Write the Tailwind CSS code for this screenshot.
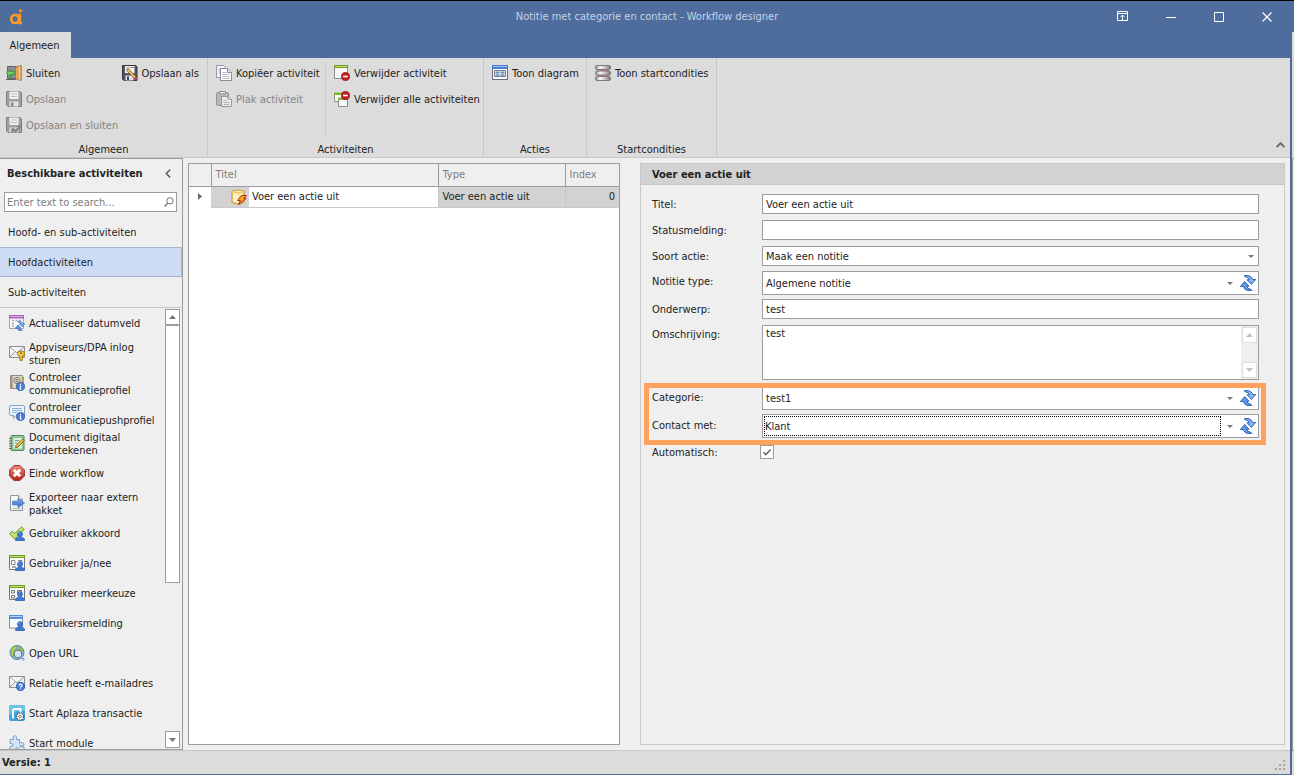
<!DOCTYPE html>
<html lang="nl">
<head>
<meta charset="utf-8">
<title>Notitie met categorie en contact - Workflow designer</title>
<script src="https://cdn.jsdelivr.net/npm/@tailwindcss/browser@4"></script>
</head>
<body class="h-screen overflow-hidden bg-[#efefef] text-[11px] leading-[13px] text-[#222222] font-['DejaVu_Sans_Condensed','DejaVu_Sans',sans-serif]">

<svg width="0" height="0" class="absolute" aria-hidden="true">
  <defs>
    <linearGradient id="blueG" x1="0" y1="0" x2="0" y2="1"><stop offset="0" stop-color="#8fb4ee"/><stop offset="1" stop-color="#2d62bd"/></linearGradient>
    <linearGradient id="redG" x1="0" y1="0" x2="0" y2="1"><stop offset="0" stop-color="#ef8a7c"/><stop offset="1" stop-color="#b92217"/></linearGradient>
    <linearGradient id="paperG" x1="0" y1="0" x2="1" y2="1"><stop offset="0" stop-color="#ffffff"/><stop offset="1" stop-color="#dfe3ea"/></linearGradient>
    <linearGradient id="metalG" x1="0" y1="0" x2="1" y2="0"><stop offset="0" stop-color="#888"/><stop offset=".3" stop-color="#f8f8f8"/><stop offset=".6" stop-color="#ccc"/><stop offset="1" stop-color="#777"/></linearGradient>
    <symbol id="user" viewBox="0 0 10 10"><path d="M.5 9.5V8.2Q.7 6.8 3.4 6.4L3.6 5.6Q2.4 4.4 2.5 2.8 2.8.6 5 .6T7.5 2.8Q7.6 4.4 6.4 5.6l.2.8q2.7.4 2.9 1.8v1.3z" fill="#3f78d4" stroke="#1f4fa5" stroke-width=".7"/><path d="M3.6 2.6Q4 1.4 5.2 1.5" stroke="#8db6f5" fill="none"/></symbol>
    <symbol id="info" viewBox="0 0 10 10"><circle cx="5" cy="5" r="4.5" fill="#4680da" stroke="#24529f" stroke-width=".8"/><path d="M5 2v1.2M4.2 4.5H5V7.8M4 7.8h2.2" stroke="#fff" stroke-width="1.2" fill="none"/></symbol>
    <symbol id="minus" viewBox="0 0 10 10"><circle cx="5" cy="5" r="4.5" fill="#c21f24" stroke="#8c1015" stroke-width=".8"/><path d="M2.4 5h5.2" stroke="#fff" stroke-width="1.8"/></symbol>
    <symbol id="save" viewBox="0 0 16 16"><path d="M.5.5h13.2l1.8 1.2v13.800H2L.5 14z" fill="#a0a0a0" stroke="#808080"/><path d="M3.500.500h9v7.500h-9z" fill="#f0f0f0"/><path d="M5 3h6M5 5.500h6" stroke="#bdbdbd"/><path d="M3.500 10.500h9v5h-9z" fill="#e2e2e2"/><path d="M5 11.500h2.500v4H5z" fill="#8a8a8a"/></symbol>
    <symbol id="refresh" viewBox="0 0 16 16"><path d="M6 15.500h8" stroke="#c9ced6" stroke-width=".8"/><path d="M4.500.600H8.500L11.200 2 12.700 4.500H15.700L11.400 9.400 7 4.800H9.400Q9 2.400 4.500 1.400z" fill="#86b2f3" stroke="#1d5bb0" stroke-width=".9" stroke-linejoin="round"/><path d="M11.300 15.400H7.300L4.700 14 3.300 11.500H.4L4.700 6.500 9 11.200H6.600Q7 13.600 11.300 14.600z" fill="#6398e6" stroke="#1d5bb0" stroke-width=".9" stroke-linejoin="round"/></symbol>
    <symbol id="env" viewBox="0 0 16 16"><path d="M.5 2.500h15v11H.5z" fill="url(#paperG)" stroke="#8b8f96"/><path d="M1 3l7 6 7-6M1 13l5.200-5.200M15 13L9.800 7.800" fill="none" stroke="#8b8f96" stroke-width=".9"/></symbol>
    <symbol id="up" viewBox="0 0 7 4"><path d="M3.500 0L7 4H0z" fill="currentColor"/></symbol>
    <symbol id="down" viewBox="0 0 7 4"><path d="M0 0h7L3.500 4z" fill="currentColor"/></symbol>
  </defs>
</svg>

<div class="flex h-full flex-col border-t border-black">
  <header class="relative flex h-[31px] shrink-0 items-center justify-between bg-[#4f6d9c] pr-[21px] pl-[9px]">
    <svg class="h-[16px] w-[14px]" viewBox="0 0 14 16"><path d="M6 6C3.500 6 2.300 7.700 2.300 10s1.200 4 3.700 4 4-1.700 4-4-1.500-4-4-4z" fill="none" stroke="#ff9a26" stroke-width="2.600"/><path d="M9 4.700h3V13h1v2.300H9.200z" fill="#ff9a26"/><path d="M11.500 0v3.600M9.700 1.800h3.600" stroke="#ff9a26" stroke-width="1.200"/></svg>
    <h1 class="absolute inset-x-0 text-center text-[#c5d2e8]">Notitie met categorie en contact - Workflow designer</h1>
    <div class="relative flex items-center gap-[36px] text-white">
      <button aria-label="Lint weergeven" class="w-[12px]"><svg class="h-[11px] w-[12px]" viewBox="0 0 12 11" fill="none" stroke="currentColor"><path d="M.5.500h10v9H.5zM.5 2.500h10M5.500 9V4.500M3.500 6L5.500 4l2 2"/></svg></button>
      <button aria-label="Minimaliseren" class="w-[12px]"><svg class="h-[12px] w-[12px]" viewBox="0 0 12 12" stroke="currentColor"><path d="M1 6.500h10"/></svg></button>
      <button aria-label="Maximaliseren" class="w-[12px]"><svg class="h-[12px] w-[12px]" viewBox="0 0 12 12" fill="none" stroke="currentColor"><path d="M1.500 1.500h9v9h-9z"/></svg></button>
      <button aria-label="Sluiten" class="w-[12px]"><svg class="h-[12px] w-[12px]" viewBox="0 0 12 12" stroke="currentColor" stroke-width="1.200"><path d="M1.500 1.500l9 9M10.500 1.500l-9 9"/></svg></button>
    </div>
  </header>

  <div class="flex min-h-0 flex-1">
    <div class="flex min-w-0 flex-1 flex-col border-r-2 border-b border-[#4f6d9c]">
      <nav class="flex h-[26px] shrink-0 bg-[#4f6d9c]"><button class="w-[71px] bg-[#dcdcdc] pr-[2px]">Algemeen</button></nav>

      <section class="flex h-[100px] shrink-0 border-b border-[#c8c8c8] bg-[#dcdcdc]" aria-label="Lint">
        <div class="flex w-[208px] flex-col border-r border-[#c8c8c8] pt-[2px]">
          <div class="flex flex-1 justify-between pr-[8px] pl-[6px]">
            <div class="flex flex-col">
              <button class="flex h-[26px] items-center gap-[4px]"><svg class="size-[16px]" viewBox="0 0 16 16"><path d="M1.500 1.500h9v12h-9z" fill="#8b9095" stroke="#5f6468"/><path d="M0 14.500h10" stroke="#666"/><path d="M9.500 2L15.300.400v15.200L9.500 13.800z" fill="#e3a55c" stroke="#a8743a" stroke-width=".8"/><path d="M13.500 1.500v13" stroke="#f6d3a0"/><path d="M.4 8.200L4.500 4.500v2.200H8.600v3H4.500v2.500z" fill="#79c967" stroke="#2f8430" stroke-width=".8"/></svg>Sluiten</button>
              <button class="flex h-[26px] items-center gap-[4px] text-[#848484]" disabled><svg class="size-[16px]"><use href="#save"/></svg>Opslaan</button>
              <button class="flex h-[26px] items-center gap-[4px] text-[#848484]" disabled><svg class="size-[16px]" viewBox="0 0 16 16"><use href="#save" width="16" height="16"/><path d="M6.500 11.500l3 3 6-6.500" fill="none" stroke="#888" stroke-width="2.600"/></svg>Opslaan en sluiten</button>
            </div>
            <button class="flex h-[26px] items-center gap-[4px]"><svg class="size-[16px]" viewBox="0 0 16 16"><path d="M.5.500h13.200l1.300 1.200v13.800H2L.5 14z" fill="#555665" stroke="#33343f"/><path d="M3 1h9.500v7H3z" fill="#f7f3f5"/><path d="M4 2.500h5" stroke="#e3a0b8"/><path d="M9 2.500h3" stroke="#4caf50"/><path d="M3.500 10.500h8v5h-8z" fill="#e3e3ea"/><path d="M5 11.500h2v3.500H5z" fill="#44454f"/><path d="M5 4l8.500 9" stroke="#7a5316" stroke-width="3"/><path d="M5.500 4.500l7.500 8" stroke="#f5cb6a" stroke-width="1.800"/><path d="M13 12.500l2 2.200" stroke="#c4475c" stroke-width="2.600"/></svg>Opslaan als</button>
          </div>
          <h2 class="pb-[1px] text-center">Algemeen</h2>
        </div>
        <div class="flex w-[276px] flex-col border-r border-[#c8c8c8] pt-[2px]">
          <div class="flex flex-1">
            <div class="mt-[2px] mb-[6px] flex w-[118px] flex-col border-r border-[#c8c8c8] pl-[8px]">
              <button class="-mt-[2px] flex h-[26px] items-center gap-[4px] whitespace-nowrap"><svg class="size-[16px]" viewBox="0 0 16 16"><path d="M.5.500h7l2 2v10H.5z" fill="#f4f6f9" stroke="#969ca6"/><path d="M2.500 4h2M2.500 6h2M2.500 8h2" stroke="#aab"/><path d="M4.500 3.500h7l4 4v8h-11z" fill="#fff" stroke="#858b95"/><path d="M11.500 3.500v4h4" fill="#d9dfe8" stroke="#858b95"/><path d="M6.500 7.500h4M6.500 9.500h7M6.500 11.500h7M6.500 13.500h7" stroke="#b4bbc7"/></svg>Kopiëer activiteit</button>
              <button class="flex h-[26px] items-center gap-[4px] text-[#848484]" disabled><svg class="size-[16px]" viewBox="0 0 16 16"><rect x=".5" y="1.500" width="12" height="13" rx="1.500" fill="#b9b9b9" stroke="#929292"/><path d="M3.500.500h6v2.500h-6z" fill="#ddd" stroke="#929292"/><path d="M5.500 5.500h6l4 3v7h-10z" fill="#ececec" stroke="#979797"/><path d="M11.500 5.500v3h4M7.500 9.500h3M7.500 11.500h6M7.500 13.500h6" fill="none" stroke="#b3b3b3"/></svg>Plak activiteit</button>
            </div>
            <div class="flex flex-col pl-[8px]">
              <button class="flex h-[26px] items-center gap-[4px] whitespace-nowrap"><svg class="size-[16px]" viewBox="0 0 16 16"><path d="M.5 1.500h13v12H.5z" fill="#f8f8f8" stroke="#8c8c8c"/><path d="M0 0h14v3H0z" fill="#6f9d1e"/><path d="M1 1.500h12" stroke="#c4e07a"/><use href="#minus" x="7" y="7" width="9" height="9"/></svg>Verwijder activiteit</button>
              <button class="flex h-[26px] items-center gap-[4px] whitespace-nowrap"><svg class="size-[16px]" viewBox="0 0 16 16"><path d="M.5 2.500h8v8h-8z" fill="#f8f8f8" stroke="#8c8c8c"/><path d="M0 1.500h8v2.500H0z" fill="#84b52c"/><path d="M4.500 7.500h9v8h-9z" fill="#f8f8f8" stroke="#8c8c8c"/><path d="M4 6.500h10V9H4z" fill="#84b52c"/><use href="#minus" x="7" y="0" width="9" height="9"/></svg>Verwijder alle activiteiten</button>
            </div>
          </div>
          <h2 class="pb-[1px] text-center">Activiteiten</h2>
        </div>
        <div class="flex w-[103px] flex-col border-r border-[#c8c8c8] pt-[2px]">
          <div class="flex-1 pl-[8px]"><button class="flex h-[26px] items-center gap-[4px] whitespace-nowrap"><svg class="size-[16px]" viewBox="0 0 16 16"><path d="M.5.500h15v14H.5z" fill="#fafbfd" stroke="#686e78"/><path d="M0 0h16v4H0z" fill="#4a7bd0"/><path d="M1 1.500h14" stroke="#a4c3f5"/><path d="M2.500 5.500h11v6h-11z" fill="#fff" stroke="#777d88"/><path d="M3.500 6.500H7.500v2H3.500zM8.500 6.500h4v2h-4zM3.500 9.300h4v1.500h-4zM8.500 9.300h4v1.500h-4z" fill="#5f8db5"/></svg>Toon diagram</button></div>
          <h2 class="pb-[1px] text-center">Acties</h2>
        </div>
        <div class="flex w-[130px] flex-col border-r border-[#c8c8c8] pt-[2px]">
          <div class="flex-1 pl-[8px]"><button class="flex h-[26px] items-center gap-[4px] whitespace-nowrap"><svg class="size-[16px]" viewBox="0 0 16 16"><path d="M2 4.500h12v1.500H2zM2 10h12v1.500H2z" fill="#d9726b"/><rect x=".5" y=".5" width="15" height="4" rx="1.500" fill="url(#metalG)" stroke="#7d7d7d"/><rect x=".5" y="6" width="15" height="4" rx="1.500" fill="url(#metalG)" stroke="#7d7d7d"/><rect x=".5" y="11.500" width="15" height="4" rx="1.500" fill="url(#metalG)" stroke="#7d7d7d"/></svg>Toon startcondities</button></div>
          <h2 class="pb-[1px] text-center">Startcondities</h2>
        </div>
        <div class="flex flex-1 items-end justify-end pr-[5px] pb-[9px]"><button aria-label="Lint inklappen" class="text-[#666]"><svg class="block h-[6px] w-[9px]" viewBox="0 0 9 6" fill="none" stroke="currentColor" stroke-width="1.800"><path d="M.7 5L4.500 1.200 8.300 5"/></svg></button></div>
      </section>

      <main class="flex min-h-0 flex-1">
        <aside class="flex w-[183px] shrink-0 flex-col border-y border-r border-[#9c9c9c]">
          <div class="flex h-[29px] shrink-0 items-center justify-between pr-[11px] pl-[7px]"><h2 class="font-bold whitespace-nowrap">Beschikbare activiteiten</h2><button aria-label="Paneel inklappen" class="text-[#666]"><svg class="block h-[9px] w-[6px]" viewBox="0 0 6 9" fill="none" stroke="currentColor" stroke-width="1.600"><path d="M5.200.600L1.300 4.500l3.900 3.900"/></svg></button></div>
          <div class="mt-[4px] mr-[5px] ml-[4px] flex h-[20px] shrink-0 items-center border border-[#9c9c9c] bg-white pr-[2px] pl-[2px]">
            <input aria-label="Zoeken" placeholder="Enter text to search..." class="min-w-0 flex-1 bg-transparent outline-none placeholder:text-[#7d7d7d]">
            <svg class="size-[10px]" viewBox="0 0 10 10" fill="none" stroke="#777"><circle cx="6" cy="3.800" r="3.200"/><path d="M3.700 6.200L.6 9.400" stroke-width="1.500"/></svg>
          </div>
          <ul class="mt-[5px] shrink-0 border-b border-[#c8c8c8]">
            <li><button class="h-[30px] w-full pl-[8px] text-left">Hoofd- en sub-activiteiten</button></li>
            <li><button class="h-[30px] w-full border border-l-0 border-[#a5b4cf] bg-[#cddbf5] pl-[8px] text-left">Hoofdactiviteiten</button></li>
            <li><button class="h-[30px] w-full pl-[8px] text-left">Sub-activiteiten</button></li>
          </ul>
          <div class="flex min-h-0 flex-1 overflow-hidden">
            <ul class="min-w-0 flex-1 whitespace-nowrap">
              <li class="flex h-[30px] items-center gap-[4px] pl-[9px]"><svg class="size-[16px] shrink-0" viewBox="0 0 16 16"><path d="M.5 1.500h14v12H.5z" fill="#f8f8fa" stroke="#a5a5a5"/><path d="M0 0h15v3.500H0z" fill="#a763be"/><path d="M1 1.500h13" stroke="#dba6ea"/><path d="M3 5.500h2M6.500 5.500h2M10 5.500h2M3 8.500h2M3 11h2" stroke="#a0a4ac" stroke-width="1.500"/><use href="#refresh" x="6" y="6" width="10" height="10"/></svg>Actualiseer datumveld</li>
              <li class="flex h-[30px] items-center gap-[4px] pl-[9px]"><svg class="size-[16px] shrink-0" viewBox="0 0 16 16"><use href="#env" y="-1" width="16" height="16"/><path d="M8.500 8.500Q8.500 6 12 6T15.500 8.500Q15.500 11 13.200 11.300V15.500H11V11.300Q8.500 11 8.500 8.500z" fill="#f8cd42" stroke="#a3770f"/><circle cx="12" cy="8.300" r="1" fill="#8f6508"/></svg><span class="pt-[2px]">Appviseurs/DPA inlog<br>sturen</span></li>
              <li class="flex h-[30px] items-center gap-[4px] pl-[9px]"><svg class="size-[16px] shrink-0" viewBox="0 0 16 16"><path d="M1.500.500h12v13h-12z" fill="#ded9cc" stroke="#938a78"/><path d="M1 1h2.500v12H1z" fill="#9f927a"/><path d="M14 2v3" stroke="#84b52c" stroke-width="2"/><path d="M14 5.500v3" stroke="#d28c3c" stroke-width="2"/><circle cx="8" cy="5.500" r="3.200" fill="none" stroke="#7b7b7b"/><circle cx="8" cy="5.500" r="1.200" fill="none" stroke="#7b7b7b"/><use href="#info" x="7" y="7" width="9" height="9"/></svg><span class="pt-[2px]">Controleer<br>communicatieprofiel</span></li>
              <li class="flex h-[30px] items-center gap-[4px] pl-[9px]"><svg class="size-[16px] shrink-0" viewBox="0 0 16 16"><path d="M2 .5h12q1.500 0 1.500 1.500v7q0 1.500-1.500 1.500H7L4.500 13.500v-3H2Q.5 10.500.5 9V2Q.5.500 2 .5z" fill="#eef5fc" stroke="#7fa3c5"/><path d="M3 3.500h10M3 5.500h10M3 7.500h5" stroke="#8ab0d0"/><use href="#info" x="7" y="7" width="9" height="9"/></svg><span class="pt-[2px]">Controleer<br>communicatiepushprofiel</span></li>
              <li class="flex h-[30px] items-center gap-[4px] pl-[9px]"><svg class="size-[16px] shrink-0" viewBox="0 0 16 16"><rect x="2" y=".5" width="13" height="15" rx="1" fill="#8fc495" stroke="#548b5d"/><path d="M4.500 3h8.500v10.500H4.500z" fill="#dcefdc"/><path d="M0 3.500h3M0 6h3M0 8.500h3M0 11h3M0 13.500h3" stroke="#666"/><path d="M6 5.500h4M6 8h2" stroke="#7a9c7d"/><path d="M7 10.500L13.500 4l1.800 1.800L9 12l-2.500.8z" fill="#f2bd4a" stroke="#6f4b12" stroke-width=".8"/></svg><span class="pt-[2px]">Document digitaal<br>ondertekenen</span></li>
              <li class="flex h-[30px] items-center gap-[4px] pl-[9px]"><svg class="size-[16px] shrink-0" viewBox="0 0 16 16"><path d="M5 .6h6L15.400 5v6L11 15.400H5L.6 11V5z" fill="url(#redG)" stroke="#a62c20" stroke-linejoin="round"/><path d="M4.800 4.800l6.400 6.400M11.200 4.800l-6.400 6.400" stroke="#fff" stroke-width="3"/></svg>Einde workflow</li>
              <li class="flex h-[30px] items-center gap-[4px] pl-[9px]"><svg class="size-[16px] shrink-0" viewBox="0 0 16 16"><path d="M1.500.500h8l4 4v11h-12z" fill="url(#paperG)" stroke="#9297a0"/><path d="M9.500.500v4h4" fill="#e1e5eb" stroke="#9297a0"/><path d="M3.500 13.500h8" stroke="#bbb"/><path d="M3.500 6.200H9V3.500L15.500 8 9 12.500V9.800H3.500z" fill="url(#blueG)" stroke="#3d72cb" stroke-width=".8"/></svg><span class="pt-[2px]">Exporteer naar extern<br>pakket</span></li>
              <li class="flex h-[30px] items-center gap-[4px] pl-[9px]"><svg class="size-[16px] shrink-0" viewBox="0 0 16 16"><path d="M.6 8.500L3 6.200 5.500 8.500 12.500 1.800 15.300 4.500 5.500 14z" fill="#c2e06e" stroke="#759f2c"/><use href="#user" x="6" y="6" width="10" height="10"/></svg>Gebruiker akkoord</li>
              <li class="flex h-[30px] items-center gap-[4px] pl-[9px]"><svg class="size-[16px] shrink-0" viewBox="0 0 16 16"><path d="M.5 1.500h15v13H.5z" fill="#fafafa" stroke="#777"/><path d="M0 0h16v3H0z" fill="#6f9d1e"/><path d="M1 1.500h14" stroke="#c4e07a"/><path d="M2.500 5.500h3.500v4H2.500zM9 5.500h4v3" fill="none" stroke="#888"/><path d="M3 12h4" stroke="#555"/><use href="#user" x="6" y="6" width="10" height="10"/></svg>Gebruiker ja/nee</li>
              <li class="flex h-[30px] items-center gap-[4px] pl-[9px]"><svg class="size-[16px] shrink-0" viewBox="0 0 16 16"><path d="M.5 1.500h15v13H.5z" fill="#fafafa" stroke="#777"/><path d="M0 0h16v3H0z" fill="#6f9d1e"/><path d="M1 1.500h14" stroke="#c4e07a"/><path d="M2.500 5.500h3v2.500h-3zM2.500 10.500h3v2.500h-3zM8.500 5.500h4v2.500h-4z" fill="none" stroke="#777"/><use href="#user" x="6" y="6" width="10" height="10"/></svg>Gebruiker meerkeuze</li>
              <li class="flex h-[30px] items-center gap-[4px] pl-[9px]"><svg class="size-[16px] shrink-0" viewBox="0 0 16 16"><path d="M.5 1.500h13v11.500H.5z" fill="#fafbfd" stroke="#8c929c"/><path d="M0 0h14v4H0z" fill="#5b8adb"/><path d="M1 1.500h12" stroke="#b4cff8"/><use href="#user" x="6" y="6" width="10" height="10"/></svg>Gebruikersmelding</li>
              <li class="flex h-[30px] items-center gap-[4px] pl-[9px]"><svg class="size-[16px] shrink-0" viewBox="0 0 16 16"><circle cx="8" cy="7.500" r="7" fill="#8dbce6" stroke="#5a83b0"/><path d="M3 2.500Q6 .5 8.500 1.500L7 4.500 4.500 6 5 9.500 3.500 12Q0 8 3 2.500zM10.500 2Q14.500 4 14.500 7L11 5.500z" fill="#a3d35a" stroke="#6a9c30" stroke-width=".6"/><circle cx="9" cy="9" r="3.800" fill="#d5e7f5" fill-opacity=".9" stroke="#777" stroke-width="1.200"/><path d="M12 12l3 3" stroke="#8fb0dc" stroke-width="2.400"/></svg>Open URL</li>
              <li class="flex h-[30px] items-center gap-[4px] pl-[9px]"><svg class="size-[16px] shrink-0" viewBox="0 0 16 16"><use href="#env" y="-1" width="16" height="16"/><circle cx="11.500" cy="11.500" r="4.200" fill="#4680da" stroke="#24529f" stroke-width=".8"/><path d="M10 10.500Q10.200 9 11.600 9.100T13 10.600Q12.900 11.300 11.600 12v.6M11.600 13.400v1" fill="none" stroke="#fff" stroke-width="1.100"/></svg>Relatie heeft e-mailadres</li>
              <li class="flex h-[30px] items-center gap-[4px] pl-[9px]"><svg class="size-[16px] shrink-0" viewBox="0 0 16 16"><rect width="16" height="16" rx="2" fill="#3fa5d8"/><path d="M0 2q0-2 2-2h12q2 0 2 2v4Q8 5 0 10z" fill="#6cc3ea"/><path d="M4 13.500V5.500Q4 4 5.500 4H11.500v4" fill="none" stroke="#fff" stroke-width="1.800"/><circle cx="11" cy="11.500" r="3.600" fill="#fff" stroke="#555" stroke-width="1.400" stroke-dasharray="1.600 1"/><circle cx="11" cy="11.500" r="1.200" fill="none" stroke="#555" stroke-width=".8"/></svg>Start Aplaza transactie</li>
              <li class="flex h-[30px] items-center gap-[4px] pl-[9px]"><svg class="size-[16px] shrink-0" viewBox="0 0 16 16"><path d="M1 4.500h3.500Q3 1 5.500.700T7.500 4.500H10.500V8Q14.500 6.500 15 9T10.500 11l4.500 1v3.500H9.500Q10 12.500 8 12.500T7 15.500H1V11.500Q4 12 4 10T1 8.500z" fill="#d3e4f4" stroke="#7c9dbc"/></svg>Start module</li>
            </ul>
            <div class="mt-[1px] mr-[2px] mb-[1px] flex w-[15px] shrink-0 flex-col text-[#777]">
              <button aria-label="Omhoog" class="flex h-[16px] shrink-0 items-center justify-center border border-[#9c9c9c] bg-white"><svg class="h-[4px] w-[7px]"><use href="#up"/></svg></button>
              <div class="h-[258px] border border-[#9c9c9c] bg-white"></div>
              <div class="flex-1"></div>
              <button aria-label="Omlaag" class="flex h-[17px] shrink-0 items-center justify-center border border-[#9c9c9c] bg-white"><svg class="h-[4px] w-[7px]"><use href="#down"/></svg></button>
            </div>
          </div>
        </aside>

        <section class="mt-[5px] mb-[5px] ml-[5px] w-[432px] shrink-0 border border-[#9c9c9c] bg-white">
          <table class="w-full table-fixed border-collapse text-left">
            <colgroup><col class="w-[22px]"><col class="w-[38px]"><col class="w-[189px]"><col class="w-[127px]"><col></colgroup>
            <thead class="bg-[#efefef] text-[#7d7d7d]">
              <tr class="h-[22px] border-b border-[#9c9c9c]"><th class="border-r border-[#9c9c9c] p-0"></th><th colspan="2" class="border-r border-[#9c9c9c] p-0 pl-[4px] font-normal">Titel</th><th class="border-r border-[#9c9c9c] p-0 pl-[4px] font-normal">Type</th><th class="p-0 pl-[4px] font-normal">Index</th></tr>
            </thead>
            <tbody>
              <tr class="h-[21px]"><td class="p-0"><svg class="ml-[9px] block h-[7px] w-[4px]" viewBox="0 0 4 7"><path d="M0 0l4 3.500L0 7z" fill="#666"/></svg></td>
              <td class="border-b border-[#c8c8c8] bg-[#d2d2d2] p-0"><svg class="ml-[20px] block size-[16px]" viewBox="0 0 16 16"><path d="M1 2.500Q7-.5 13 2.500V13Q7 16.500 1 13z" fill="#fbe9a8" stroke="#d39a2e" stroke-width="1.200"/><path d="M1 2.500q6 3 12 0" fill="none" stroke="#e8c25c"/><path d="M3.500 5v8M6 6v8" stroke="#fff8dc" stroke-width="1.500"/><path d="M10.500 6.500H15.300l-2.500 2.800h2.500L7.500 15.700l2-4.200H6.500z" fill="#ffa629" stroke="#a32f14" stroke-width="1"/></svg></td>
              <td class="border-r border-b border-[#c8c8c8] p-0 pl-[3px]">Voer een actie uit</td><td class="border-r border-b border-[#c8c8c8] bg-[#d2d2d2] p-0 pl-[4px]">Voer een actie uit</td><td class="border-b border-[#c8c8c8] bg-[#d2d2d2] p-0 pr-[4px] text-right">0</td></tr>
            </tbody>
          </table>
        </section>

        <section class="mt-[5px] mr-[5px] mb-[5px] ml-[20px] min-w-0 flex-1 border border-[#c8c8c8]">
          <h2 class="flex h-[21px] items-center border-b border-[#c8c8c8] bg-[#d2d2d2] pl-[11px] font-bold">Voer een actie uit</h2>
          <form class="relative pt-[9px] pr-[25px] pl-[11px]">
            <div class="flex items-center"><label for="titel" class="w-[110px] shrink-0">Titel:</label><input id="titel" value="Voer een actie uit" class="h-[20px] min-w-0 flex-1 border border-[#9c9c9c] bg-white px-[3px] outline-none"></div>
            <div class="mt-[6px] flex items-center"><label for="status" class="w-[110px] shrink-0">Statusmelding:</label><input id="status" class="h-[20px] min-w-0 flex-1 border border-[#9c9c9c] bg-white px-[3px] outline-none"></div>
            <div class="mt-[6px] flex items-center"><label for="soort" class="w-[110px] shrink-0">Soort actie:</label>
              <div class="flex h-[20px] min-w-0 flex-1 items-center border border-[#9c9c9c] bg-white"><select id="soort" class="min-w-0 flex-1 appearance-none px-[3px] outline-none"><option>Maak een notitie</option></select><svg class="mr-[4px] h-[3px] w-[6px] text-[#777]" viewBox="0 0 6 3"><path d="M0 0h6L3 3z" fill="currentColor"/></svg></div></div>
            <div class="mt-[5px] flex items-center"><label for="type" class="w-[110px] shrink-0 pb-[3px]">Notitie type:</label>
              <div class="flex h-[24px] min-w-0 flex-1 items-center border border-[#9c9c9c] bg-white"><select id="type" class="min-w-0 flex-1 appearance-none px-[3px] outline-none"><option>Algemene notitie</option></select><svg class="mr-[7px] h-[3px] w-[6px] text-[#777]" viewBox="0 0 6 3"><path d="M0 0h6L3 3z" fill="currentColor"/></svg><button type="button" aria-label="Vernieuwen" class="mr-[2px]"><svg class="block size-[16px]"><use href="#refresh"/></svg></button></div></div>
            <div class="mt-[4px] flex items-center"><label for="onderwerp" class="w-[110px] shrink-0">Onderwerp:</label><input id="onderwerp" value="test" class="h-[20px] min-w-0 flex-1 border border-[#9c9c9c] bg-white px-[3px] outline-none"></div>
            <div class="mt-[6px] flex items-start"><label for="oms" class="w-[110px] shrink-0 pt-[3px]">Omschrijving:</label>
              <div class="flex h-[55px] min-w-0 flex-1 border border-[#9c9c9c] bg-white"><textarea id="oms" class="min-w-0 flex-1 resize-none overflow-hidden px-[3px] pt-[1px] outline-none">test</textarea>
                <div class="flex w-[17px] flex-col justify-between bg-[#efefef] p-[1px] text-[#c4c4c4]"><button type="button" aria-label="Omhoog" class="flex h-[16px] items-center justify-center border border-[#dedede] bg-white"><svg class="h-[4px] w-[7px]"><use href="#up"/></svg></button><button type="button" aria-label="Omlaag" class="flex h-[16px] items-center justify-center border border-[#dedede] bg-white"><svg class="h-[4px] w-[7px]"><use href="#down"/></svg></button></div></div></div>
            <div class="relative mt-[6px]">
              <div class="flex items-center"><label for="cat" class="w-[110px] shrink-0 pb-[2px]">Categorie:</label>
                <div class="flex h-[24px] min-w-0 flex-1 items-center border border-[#9c9c9c] bg-white"><select id="cat" class="min-w-0 flex-1 appearance-none px-[3px] outline-none"><option>test1</option></select><svg class="mr-[7px] h-[3px] w-[6px] text-[#777]" viewBox="0 0 6 3"><path d="M0 0h6L3 3z" fill="currentColor"/></svg><button type="button" aria-label="Vernieuwen" class="mr-[2px]"><svg class="block size-[16px]"><use href="#refresh"/></svg></button></div></div>
              <div class="mt-[4px] flex items-center"><label for="contact" class="w-[110px] shrink-0 pb-[2px]">Contact met:</label>
                <div class="flex h-[24px] min-w-0 flex-1 items-center border border-[#9c9c9c] bg-white"><select id="contact" class="ml-[1px] h-[20px] min-w-0 flex-1 appearance-none border border-dotted border-black outline-none"><option>Klant</option></select><svg class="mr-[7px] ml-[6px] h-[3px] w-[6px] text-[#777]" viewBox="0 0 6 3"><path d="M0 0h6L3 3z" fill="currentColor"/></svg><button type="button" aria-label="Vernieuwen" class="mr-[2px]"><svg class="block size-[16px]"><use href="#refresh"/></svg></button></div></div>
              <div class="pointer-events-none absolute -top-[3px] -right-[7px] -bottom-[7px] -left-[8px] border-[5px] border-[#ffa05c]"></div>
            </div>
            <div class="mt-[7px] flex items-center"><label for="auto" class="w-[108px] shrink-0">Automatisch:</label>
              <span class="relative block size-[14px]"><input id="auto" type="checkbox" checked class="block size-[14px] appearance-none border border-[#9c9c9c] bg-white"><svg class="pointer-events-none absolute inset-0 size-[14px]" viewBox="0 0 14 14" fill="none" stroke="#666" stroke-width="1.500"><path d="M3.500 7.200l2.300 2.400 4.800-5"/></svg></span></div>
          </form>
        </section>
      </main>

      <footer class="flex h-[24px] shrink-0 items-center justify-between border-t border-[#c8c8c8] bg-[#dcdcdc] pr-[5px] pl-[2px]"><span class="font-bold">Versie: 1</span><svg class="mt-[4px] size-[10px]" viewBox="0 0 10 10" fill="#a5a5a5"><path d="M8 0h2v2H8zM4 4h2v2H4zM8 4h2v2H8zM0 8h2v2H0zM4 8h2v2H4zM8 8h2v2H8z"/></svg></footer>
    </div>
    <div class="flex w-[2px] shrink-0 flex-col bg-[#efefef]"><div class="h-[126px] bg-[#dcdcdc]"></div><div class="flex-1 border-y border-l border-[#9c9c9c]"></div><div class="h-[24px] bg-[#dcdcdc]"></div></div>
  </div>
</div>
</body>
</html>
